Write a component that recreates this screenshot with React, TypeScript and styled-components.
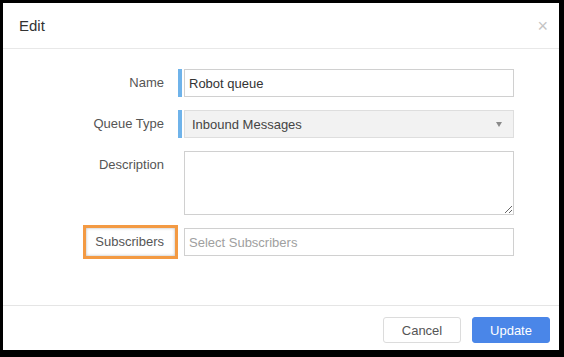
import React from 'react';
import styled, { createGlobalStyle } from 'styled-components';

const GlobalStyle = createGlobalStyle`
  html, body {
    margin: 0;
    padding: 0;
    background: #000;
  }
  body {
    padding: 3px 5px 0 3px;
    font-family: "Liberation Sans", Arial, sans-serif;
  }
`;

export default function App() {
  return (
    <>
      <GlobalStyle />
      <Modal>
        <Header>
          <Title>Edit</Title>
          <Close>×</Close>
        </Header>
        <Body>
          <Row>
            <LabelCell>
              <Label>Name</Label>
            </LabelCell>
            <Field>
              <RequiredBar $on />
              <TextInput defaultValue="Robot queue" />
            </Field>
          </Row>
          <Row>
            <LabelCell>
              <Label>Queue Type</Label>
            </LabelCell>
            <Field>
              <RequiredBar $on />
              <SelectBox>
                <span>Inbound Messages</span>
                <Caret />
              </SelectBox>
            </Field>
          </Row>
          <Row>
            <LabelCell>
              <Label>Description</Label>
            </LabelCell>
            <Field>
              <RequiredBar />
              <TextArea />
            </Field>
          </Row>
          <Row>
            <LabelCell>
              <Label $highlight>Subscribers</Label>
            </LabelCell>
            <Field>
              <RequiredBar />
              <TextInput placeholder="Select Subscribers" />
            </Field>
          </Row>
        </Body>
        <Footer>
          <Button>Cancel</Button>
          <Button $primary>Update</Button>
        </Footer>
      </Modal>
    </>
  );
}

const Modal = styled.div`
  width: 556px;
  height: 347px;
  background: #fff;
  box-shadow: 0 2px 0 #c9c9c9;
  display: flex;
  flex-direction: column;
`;

const Header = styled.div`
  height: 46px;
  box-sizing: border-box;
  border-bottom: 1px solid #e8e8e8;
  display: flex;
  align-items: center;
  justify-content: space-between;
  padding: 0 11px 0 16px;
`;

const Title = styled.div`
  font-size: 15px;
  color: #333;
`;

const Close = styled.div`
  font-size: 18px;
  color: #c4c4c4;
  line-height: 1;
`;

const Body = styled.div`
  flex: 1;
  padding: 20px 45px 0 0;
  display: flex;
  flex-direction: column;
  gap: 13px;
`;

const Row = styled.div`
  display: grid;
  grid-template-columns: 175px 1fr;
  align-items: start;
`;

const LabelCell = styled.div`
  display: flex;
  justify-content: flex-end;
`;

const Label = styled.div<{ $highlight?: boolean }>`
  font-size: 13px;
  color: #555;
  line-height: 28px;
  box-sizing: border-box;
  padding: ${(p) => (p.$highlight ? '0 11px 0 9px' : '0 14px 0 0')};
  ${(p) =>
    p.$highlight &&
    `
    margin: -3px 0;
    border: 3px solid #f39a43;
    box-shadow: inset 0 0 3px rgba(0, 0, 0, 0.3);
  `}
`;

const Field = styled.div`
  display: flex;
  align-items: stretch;
  gap: 2px;
`;

const RequiredBar = styled.div<{ $on?: boolean }>`
  width: 4px;
  flex: none;
  background: ${(p) => (p.$on ? '#6fb3ea' : 'transparent')};
`;

const TextInput = styled.input`
  flex: 1;
  min-width: 0;
  height: 28px;
  box-sizing: border-box;
  border: 1px solid #d0d0d0;
  padding: 0 4px;
  font-family: inherit;
  font-size: 13px;
  color: #333;
  outline: none;
  &::placeholder {
    color: #a0a0a0;
  }
`;

const SelectBox = styled.div`
  flex: 1;
  height: 28px;
  box-sizing: border-box;
  border: 1px solid #dedede;
  background: #f2f2f2;
  padding: 0 11px 0 7px;
  display: flex;
  align-items: center;
  justify-content: space-between;
  font-size: 13px;
  color: #444;
`;

const Caret = styled.span`
  width: 0;
  height: 0;
  border-left: 3.5px solid transparent;
  border-right: 3.5px solid transparent;
  border-top: 5px solid #8a8a8a;
`;

const TextArea = styled.textarea`
  flex: 1;
  height: 64px;
  box-sizing: border-box;
  border: 1px solid #d0d0d0;
  padding: 4px;
  margin: 0;
  font-family: inherit;
  font-size: 13px;
  outline: none;
`;

const Footer = styled.div`
  height: 45px;
  box-sizing: border-box;
  border-top: 1px solid #e5e5e5;
  padding: 11px 9px 0 0;
  display: flex;
  justify-content: flex-end;
  align-items: flex-start;
  gap: 11px;
`;

const Button = styled.button<{ $primary?: boolean }>`
  width: 78px;
  height: 26px;
  box-sizing: border-box;
  border-radius: 3px;
  font-family: inherit;
  font-size: 13px;
  border: 1px solid ${(p) => (p.$primary ? '#4a86e8' : '#dcdcdc')};
  background: ${(p) => (p.$primary ? '#4a86e8' : '#fff')};
  color: ${(p) => (p.$primary ? '#fff' : '#555')};
  cursor: pointer;
`;
